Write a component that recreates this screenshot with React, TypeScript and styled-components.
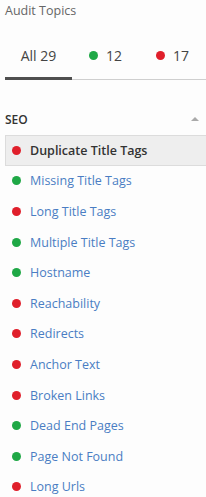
import styled, { createGlobalStyle } from 'styled-components';

const GlobalStyle = createGlobalStyle`
  body {
    margin: 0;
    background: #fdfdfd;
    font-family: "Open Sans", "Liberation Sans", sans-serif;
  }
`;

type Status = 'pass' | 'fail';

const topics: { name: string; status: Status }[] = [
  { name: 'Duplicate Title Tags', status: 'fail' },
  { name: 'Missing Title Tags', status: 'pass' },
  { name: 'Long Title Tags', status: 'fail' },
  { name: 'Multiple Title Tags', status: 'pass' },
  { name: 'Hostname', status: 'pass' },
  { name: 'Reachability', status: 'fail' },
  { name: 'Redirects', status: 'fail' },
  { name: 'Anchor Text', status: 'fail' },
  { name: 'Broken Links', status: 'fail' },
  { name: 'Dead End Pages', status: 'pass' },
  { name: 'Page Not Found', status: 'pass' },
  { name: 'Long Urls', status: 'fail' },
];

function App() {
  return (
    <Panel>
      <GlobalStyle />
      <Title>Audit Topics</Title>
      <Tabs>
        <Tab active>All 29</Tab>
        <Tab>
          <Dot status="pass" />
          12
        </Tab>
        <Tab>
          <Dot status="fail" />
          17
        </Tab>
      </Tabs>
      <SectionHeader>
        <span>SEO</span>
        <Caret />
      </SectionHeader>
      <List>
        {topics.map((t, i) => (
          <Row key={t.name} selected={i === 0}>
            <Dot status={t.status} />
            <RowLabel selected={i === 0}>{t.name}</RowLabel>
          </Row>
        ))}
      </List>
    </Panel>
  );
}

export default App;

const Panel = styled.div`
  width: 206px;
  height: 497px;
  overflow: hidden;
  padding-left: 5px;
  box-sizing: border-box;
`;

const Title = styled.div`
  height: 22px;
  line-height: 22px;
  font-size: 12.5px;
  color: #666;
`;

const Tabs = styled.div`
  display: flex;
  margin-top: 17px;
  border-bottom: 1px solid #cfcfcf;
`;

const Tab = styled.div<{ active?: boolean }>`
  width: 67px;
  height: 41px;
  display: flex;
  align-items: center;
  justify-content: center;
  gap: 8px;
  font-size: 14px;
  color: #444;
  box-sizing: border-box;
  margin-bottom: -1px;
  padding-bottom: 6px;
  border-bottom: 3px solid ${({ active }) => (active ? '#4f4f4f' : 'transparent')};
`;

const Dot = styled.span<{ status: Status }>`
  display: inline-block;
  width: 9px;
  height: 9px;
  border-radius: 50%;
  flex-shrink: 0;
  background: ${({ status }) => (status === 'pass' ? '#1fa846' : '#e01f2b')};
`;

const SectionHeader = styled.div`
  display: flex;
  align-items: center;
  justify-content: space-between;
  height: 30px;
  margin-top: 24px;
  padding-right: 7px;
  font-size: 12px;
  font-weight: 600;
  color: #333;
`;

const Caret = styled.span`
  width: 0;
  height: 0;
  border-left: 4px solid transparent;
  border-right: 4px solid transparent;
  border-bottom: 4px solid #aaa;
`;

const List = styled.div`
  display: flex;
  flex-direction: column;
  margin-top: 1px;
`;

const Row = styled.div<{ selected?: boolean }>`
  display: flex;
  align-items: center;
  gap: 9px;
  height: 30.6px;
  box-sizing: border-box;
  padding-left: 6px;
  margin-right: -2px;
  background: ${({ selected }) => (selected ? '#eeeeee' : 'transparent')};
  border: 1px solid ${({ selected }) => (selected ? '#dcdcdc' : 'transparent')};
`;

const RowLabel = styled.span<{ selected?: boolean }>`
  font-size: 12.5px;
  font-weight: ${({ selected }) => (selected ? 600 : 400)};
  color: ${({ selected }) => (selected ? '#333' : '#4a7dc3')};
  white-space: nowrap;
`;
